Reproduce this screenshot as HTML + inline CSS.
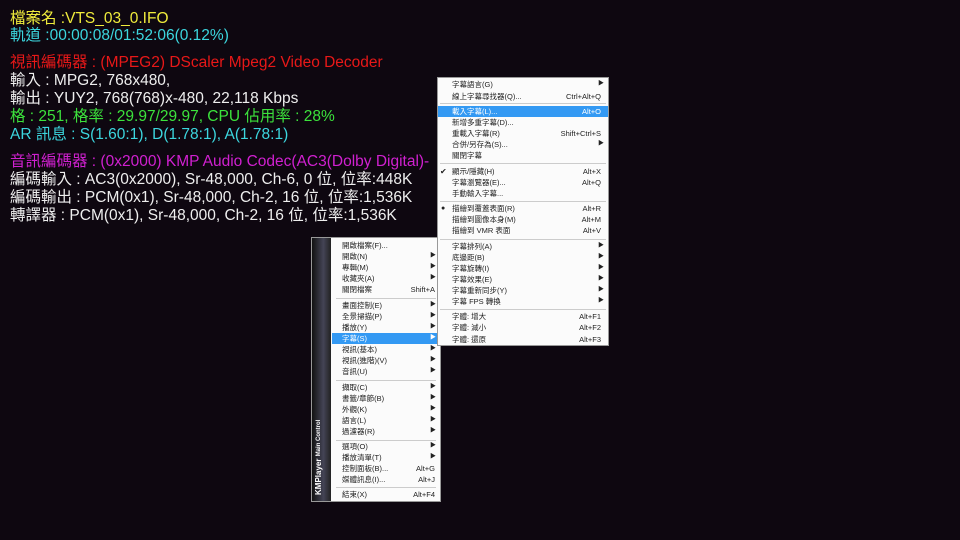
<!DOCTYPE html>
<html><head><meta charset="utf-8"><style>
body{margin:0;width:960px;height:540px;background:#0e0710;overflow:hidden;position:relative;font-family:"Liberation Sans","Noto Sans CJK TC",sans-serif}
.t{position:absolute;left:10px;font-size:15.5px;white-space:nowrap;line-height:18px}
.m{position:absolute;background:#fbfbfb;border:1px solid #999;font-family:"Liberation Sans","Noto Sans CJK TC",sans-serif;font-size:7.5px;color:#222}
.i{position:absolute;left:0;right:0;height:11px;line-height:11px;white-space:nowrap}
.i .k{position:absolute;right:7px}
.i .a{position:absolute;right:4px;font-size:6px}
.h{background:#3399f3;color:#fff}
.s{position:absolute;height:1px;background:#ccc}
</style></head><body>
<div class="t" style="top:10px;color:#f0ec3c">檔案名 :VTS_03_0.IFO</div>
<div class="t" style="top:27px;color:#3cd6de">軌道 :00:00:08/01:52:06(0.12%)</div>
<div class="t" style="top:54px;color:#e81818">視訊編碼器 : (MPEG2) DScaler Mpeg2 Video Decoder</div>
<div class="t" style="top:72px;color:#eee">輸入 : MPG2, 768x480,</div>
<div class="t" style="top:90px;color:#eee">輸出 : YUY2, 768(768)x-480, 22,118 Kbps</div>
<div class="t" style="top:108px;color:#3ce23c">格 : 251, 格率 : 29.97/29.97, CPU 佔用率 : 28%</div>
<div class="t" style="top:126px;color:#3cd6de">AR 訊息 : S(1.60:1), D(1.78:1), A(1.78:1)</div>
<div class="t" style="top:153px;color:#d020d0">音訊編碼器 : (0x2000) KMP Audio Codec(AC3(Dolby Digital)-</div>
<div class="t" style="top:171px;color:#eee">編碼輸入 : AC3(0x2000), Sr-48,000, Ch-6, 0 位, 位率:448K</div>
<div class="t" style="top:189px;color:#eee">編碼輸出 : PCM(0x1), Sr-48,000, Ch-2, 16 位, 位率:1,536K</div>
<div class="t" style="top:207px;color:#eee">轉譯器 : PCM(0x1), Sr-48,000, Ch-2, 16 位, 位率:1,536K</div>

<div class="m" style="left:311px;top:237px;width:128px;height:263px">
<div style="position:absolute;left:0;top:0;width:19px;height:263px;background:linear-gradient(90deg,#111,#445 60%,#222)"></div>
<div style="position:absolute;left:2px;bottom:6px;width:16px;height:120px;color:#fff;font-weight:bold;font-size:8px;writing-mode:vertical-rl;transform:rotate(180deg);white-space:nowrap">KMPlayer <span style="font-size:6px">Main Control</span></div>
<div style="position:absolute;left:20px;right:0;top:0;bottom:0">
<div class="i" style="top:2px;padding-left:10px">開啟檔案(F)...</div>
<div class="i" style="top:13px;padding-left:10px">開啟(N)<span class="a">▶</span></div>
<div class="i" style="top:24px;padding-left:10px">專輯(M)<span class="a">▶</span></div>
<div class="i" style="top:35px;padding-left:10px">收藏夾(A)<span class="a">▶</span></div>
<div class="i" style="top:46px;padding-left:10px">關閉檔案<span class="k" style="right:5px">Shift+A</span></div>
<div class="s" style="top:60px;left:4px;right:4px"></div>
<div class="i" style="top:62px;padding-left:10px">畫面控制(E)<span class="a">▶</span></div>
<div class="i" style="top:73px;padding-left:10px">全景掃描(P)<span class="a">▶</span></div>
<div class="i" style="top:84px;padding-left:10px">播放(Y)<span class="a">▶</span></div>
<div class="i h" style="top:95px;padding-left:10px">字幕(S)<span class="a">▶</span></div>
<div class="i" style="top:106px;padding-left:10px">視訊(基本)<span class="a">▶</span></div>
<div class="i" style="top:117px;padding-left:10px">視訊(進階)(V)<span class="a">▶</span></div>
<div class="i" style="top:128px;padding-left:10px">音訊(U)<span class="a">▶</span></div>
<div class="s" style="top:142px;left:4px;right:4px"></div>
<div class="i" style="top:144px;padding-left:10px">擷取(C)<span class="a">▶</span></div>
<div class="i" style="top:155px;padding-left:10px">書籤/章節(B)<span class="a">▶</span></div>
<div class="i" style="top:166px;padding-left:10px">外觀(K)<span class="a">▶</span></div>
<div class="i" style="top:177px;padding-left:10px">語言(L)<span class="a">▶</span></div>
<div class="i" style="top:188px;padding-left:10px">過濾器(R)<span class="a">▶</span></div>
<div class="s" style="top:202px;left:4px;right:4px"></div>
<div class="i" style="top:203px;padding-left:10px">選項(O)<span class="a">▶</span></div>
<div class="i" style="top:214px;padding-left:10px">播放清單(T)<span class="a">▶</span></div>
<div class="i" style="top:225px;padding-left:10px">控制面板(B)...<span class="k" style="right:5px">Alt+G</span></div>
<div class="i" style="top:236px;padding-left:10px">媒體訊息(I)...<span class="k" style="right:5px">Alt+J</span></div>
<div class="s" style="top:249px;left:4px;right:4px"></div>
<div class="i" style="top:251px;padding-left:10px">結束(X)<span class="k" style="right:5px">Alt+F4</span></div>
</div></div>

<div class="m" style="left:437px;top:77px;width:170px;height:267px">
<div class="i" style="top:1px;padding-left:14px">字幕語言(G)<span class="a">▶</span></div>
<div class="i" style="top:13px;padding-left:14px">線上字幕尋找器(Q)...<span class="k">Ctrl+Alt+Q</span></div>
<div class="s" style="top:25px;left:2px;right:2px"></div>
<div class="i h" style="top:28px;padding-left:14px">載入字幕(L)...<span class="k">Alt+O</span></div>
<div class="i" style="top:39px;padding-left:14px">新增多重字幕(D)...</div>
<div class="i" style="top:50px;padding-left:14px">重載入字幕(R)<span class="k">Shift+Ctrl+S</span></div>
<div class="i" style="top:61px;padding-left:14px">合併/另存為(S)...<span class="a">▶</span></div>
<div class="i" style="top:72px;padding-left:14px">關閉字幕</div>
<div class="s" style="top:85px;left:2px;right:2px"></div>
<div class="i" style="top:88px;padding-left:14px"><span style="position:absolute;left:2px;top:0;font-size:8px">✔</span>顯示/隱藏(H)<span class="k">Alt+X</span></div>
<div class="i" style="top:99px;padding-left:14px">字幕瀏覽器(E)...<span class="k">Alt+Q</span></div>
<div class="i" style="top:110px;padding-left:14px">手動輸入字幕...</div>
<div class="s" style="top:123px;left:2px;right:2px"></div>
<div class="i" style="top:125px;padding-left:14px"><span style="position:absolute;left:3px;top:0;font-size:7px">●</span>描繪到覆蓋表面(R)<span class="k">Alt+R</span></div>
<div class="i" style="top:136px;padding-left:14px">描繪到圖像本身(M)<span class="k">Alt+M</span></div>
<div class="i" style="top:147px;padding-left:14px">描繪到 VMR 表面<span class="k">Alt+V</span></div>
<div class="s" style="top:161px;left:2px;right:2px"></div>
<div class="i" style="top:163px;padding-left:14px">字幕排列(A)<span class="a">▶</span></div>
<div class="i" style="top:174px;padding-left:14px">底邊距(B)<span class="a">▶</span></div>
<div class="i" style="top:185px;padding-left:14px">字幕旋轉(I)<span class="a">▶</span></div>
<div class="i" style="top:196px;padding-left:14px">字幕效果(E)<span class="a">▶</span></div>
<div class="i" style="top:207px;padding-left:14px">字幕重新同步(Y)<span class="a">▶</span></div>
<div class="i" style="top:218px;padding-left:14px">字幕 FPS 轉換<span class="a">▶</span></div>
<div class="s" style="top:231px;left:2px;right:2px"></div>
<div class="i" style="top:233px;padding-left:14px">字體: 增大<span class="k">Alt+F1</span></div>
<div class="i" style="top:244px;padding-left:14px">字體: 減小<span class="k">Alt+F2</span></div>
<div class="i" style="top:256px;padding-left:14px">字體: 還原<span class="k">Alt+F3</span></div>
</div>
</body></html>
